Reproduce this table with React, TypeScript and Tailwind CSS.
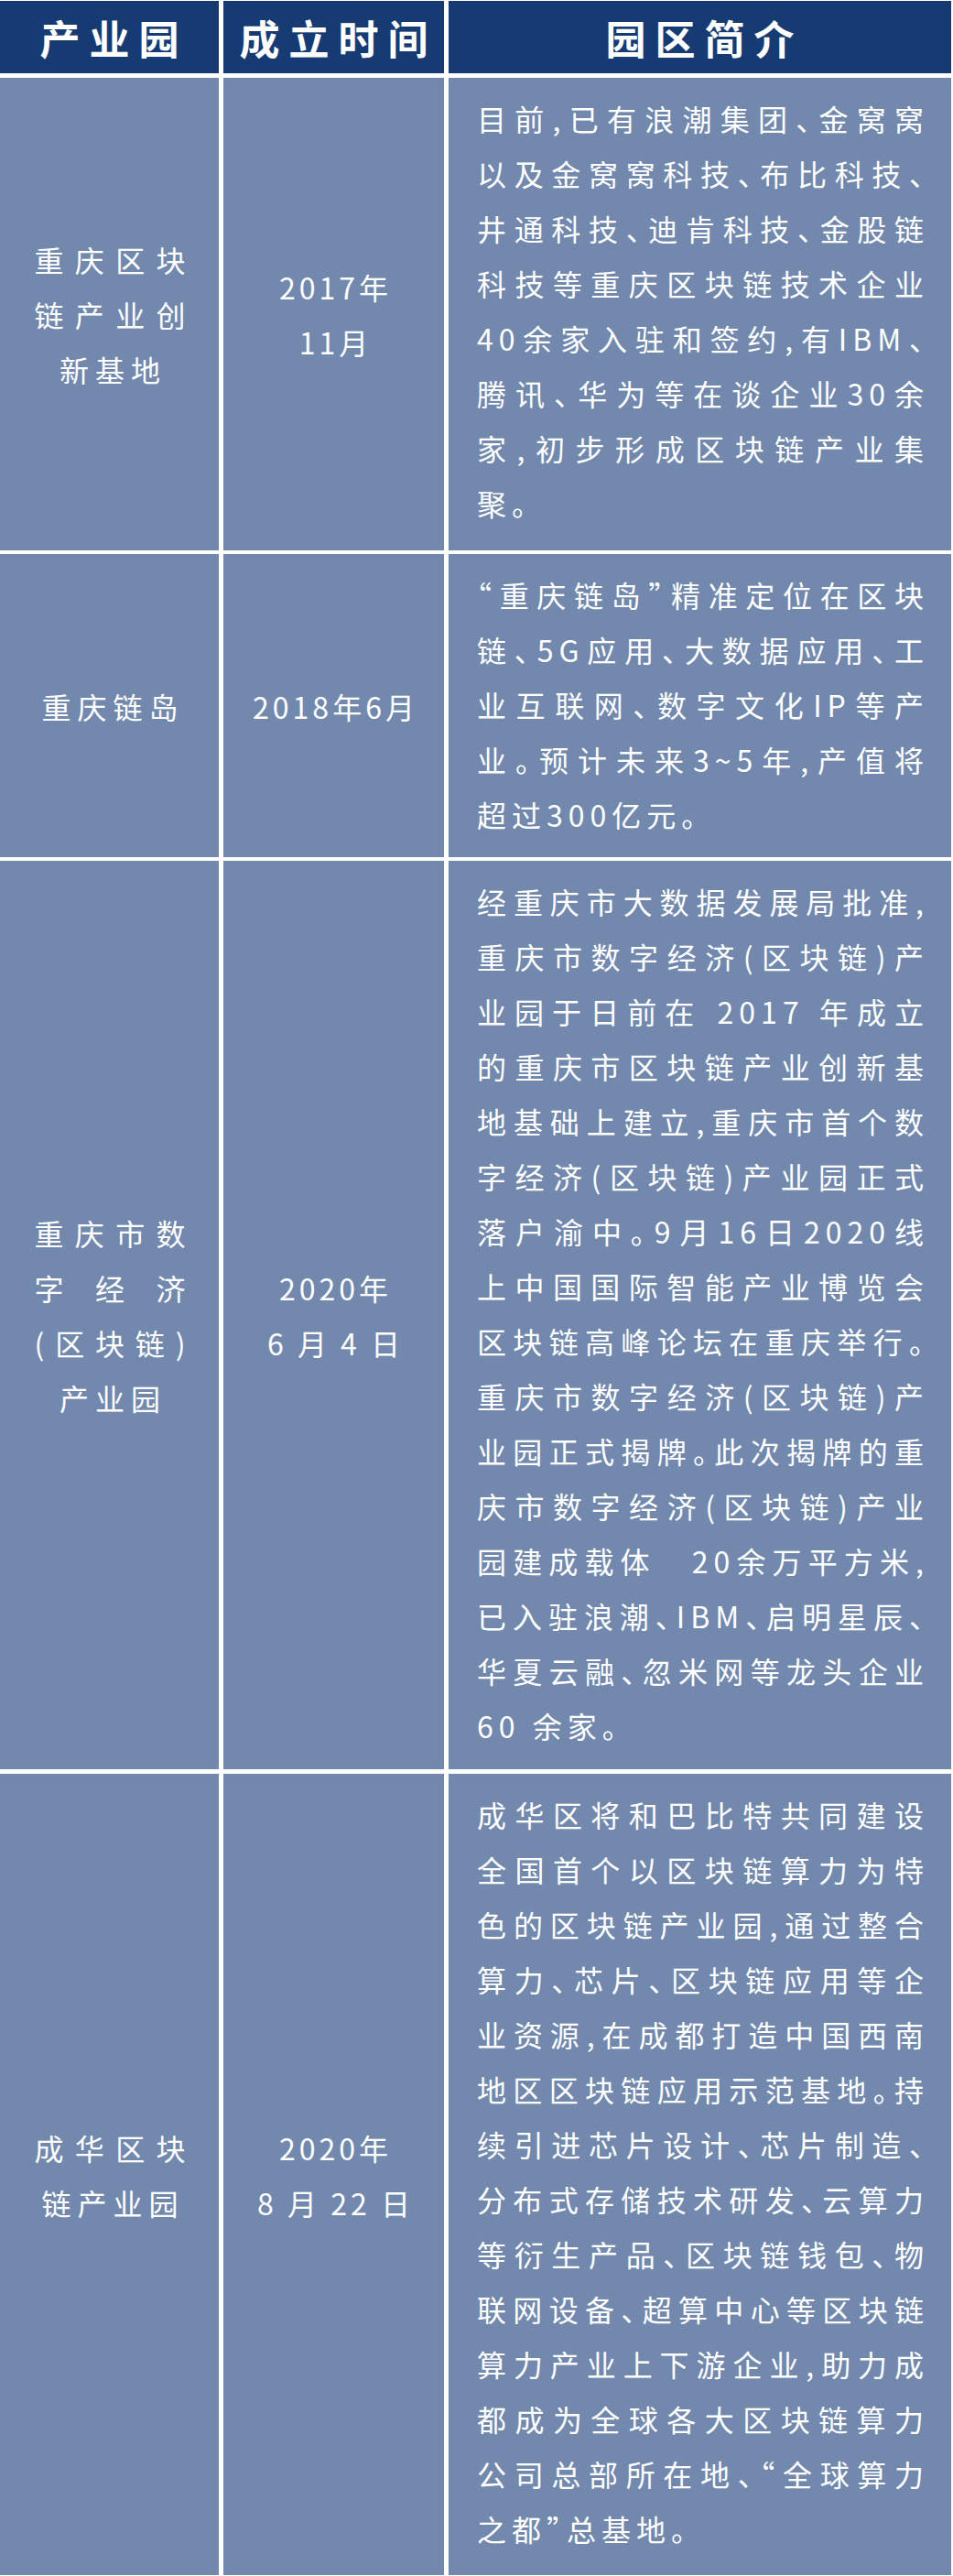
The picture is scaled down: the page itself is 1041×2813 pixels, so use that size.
import React from "react";

type Row = {
  h: string;
  mt: string;
  name: string[];
  date: string[];
  desc: string[];
};

const rows: Row[] = [
  {
    h: "h-[516px]",
    mt: "mt-[5px]",
    name: ["重庆区块", "链产业创", "新基地"],
    date: ["2017年", "11月"],
    desc: [
      "目前,已有浪潮集团、金窝窝",
      "以及金窝窝科技、布比科技、",
      "井通科技、迪肯科技、金股链",
      "科技等重庆区块链技术企业",
      "40余家入驻和签约,有IBM、",
      "腾讯、华为等在谈企业30余",
      "家,初步形成区块链产业集",
      "聚。",
    ],
  },
  {
    h: "h-[331px]",
    mt: "mt-[4px]",
    name: ["重庆链岛"],
    date: ["2018年6月"],
    desc: [
      "“重庆链岛”精准定位在区块",
      "链、5G应用、大数据应用、工",
      "业互联网、数字文化IP等产",
      "业。预计未来3~5年,产值将",
      "超过300亿元。",
    ],
  },
  {
    h: "h-[992px]",
    mt: "mt-[4px]",
    name: ["重庆市数", "字 经 济", "(区块链)", "产业园"],
    date: ["2020年", "6 月 4 日"],
    desc: [
      "经重庆市大数据发展局批准,",
      "重庆市数字经济(区块链)产",
      "业园于日前在 2017 年成立",
      "的重庆市区块链产业创新基",
      "地基础上建立,重庆市首个数",
      "字经济(区块链)产业园正式",
      "落户渝中。9月16日2020线",
      "上中国国际智能产业博览会",
      "区块链高峰论坛在重庆举行。",
      "重庆市数字经济(区块链)产",
      "业园正式揭牌。此次揭牌的重",
      "庆市数字经济(区块链)产业",
      "园建成载体\u300020余万平方米,",
      "已入驻浪潮、IBM、启明星辰、",
      "华夏云融、忽米网等龙头企业",
      "60 余家。",
    ],
  },
  {
    h: "h-[875px]",
    mt: "mt-[5px]",
    name: ["成华区块", "链产业园"],
    date: ["2020年", "8 月 22 日"],
    desc: [
      "成华区将和巴比特共同建设",
      "全国首个以区块链算力为特",
      "色的区块链产业园,通过整合",
      "算力、芯片、区块链应用等企",
      "业资源,在成都打造中国西南",
      "地区区块链应用示范基地。持",
      "续引进芯片设计、芯片制造、",
      "分布式存储技术研发、云算力",
      "等衍生产品、区块链钱包、物",
      "联网设备、超算中心等区块链",
      "算力产业上下游企业,助力成",
      "都成为全球各大区块链算力",
      "公司总部所在地、“全球算力",
      "之都”总基地。",
    ],
  },
];

const font = "font-['Noto_Sans_CJK_SC','Noto_Sans',sans-serif]";

function HeaderCell({ text }: { text: string }) {
  return (
    <div className="bg-[#163b73] flex items-center justify-center pl-[10px]">
      <span className="text-white font-bold text-[44px] leading-none tracking-[10px]">
        {text}
      </span>
    </div>
  );
}

function NameCell({ lines }: { lines: string[] }) {
  return (
    <div className="bg-[#7289ad] flex items-center justify-center pl-[8px]">
      <div className="w-[172px] text-white text-[32px] leading-[60px] tracking-[7px]">
        {lines.map((l, i) => {
          const last = i === lines.length - 1;
          return (
            <div
              key={i}
              className={
                last
                  ? "text-center"
                  : "text-justify [text-align-last:justify]"
              }
            >
              {l}
            </div>
          );
        })}
      </div>
    </div>
  );
}

function DateCell({ lines }: { lines: string[] }) {
  return (
    <div className="bg-[#7289ad] flex items-center justify-center pl-[4px]">
      <div className="text-white text-[32px] leading-[60px] tracking-[4px] text-center">
        {lines.map((l, i) => (
          <div key={i}>{l}</div>
        ))}
      </div>
    </div>
  );
}

function DescCell({ lines }: { lines: string[] }) {
  return (
    <div className="bg-[#7289ad] pt-[14px] pl-[31px]">
      <div className="w-[494px] text-white text-[32px] leading-[60px] tracking-[6px] [font-feature-settings:'halt']">
        {lines.map((l, i) => {
          const last = i === lines.length - 1;
          return (
            <div
              key={i}
              className={
                last
                  ? "text-left"
                  : "text-justify [text-align-last:justify]"
              }
            >
              {l}
            </div>
          );
        })}
      </div>
    </div>
  );
}

export default function App() {
  return (
    <div
      className={`w-[1041px] h-[2813px] bg-white pt-[1px] pr-[2px] flex flex-col ${font}`}
    >
      <div className="grid grid-cols-[239px_241px_549px] gap-x-[5px] h-[79px]">
        <HeaderCell text="产业园" />
        <HeaderCell text="成立时间" />
        <HeaderCell text="园区简介" />
      </div>
      {rows.map((r, i) => (
        <div
          key={i}
          className={`grid grid-cols-[239px_241px_549px] gap-x-[5px] ${r.h} ${r.mt}`}
        >
          <NameCell lines={r.name} />
          <DateCell lines={r.date} />
          <DescCell lines={r.desc} />
        </div>
      ))}
    </div>
  );
}
